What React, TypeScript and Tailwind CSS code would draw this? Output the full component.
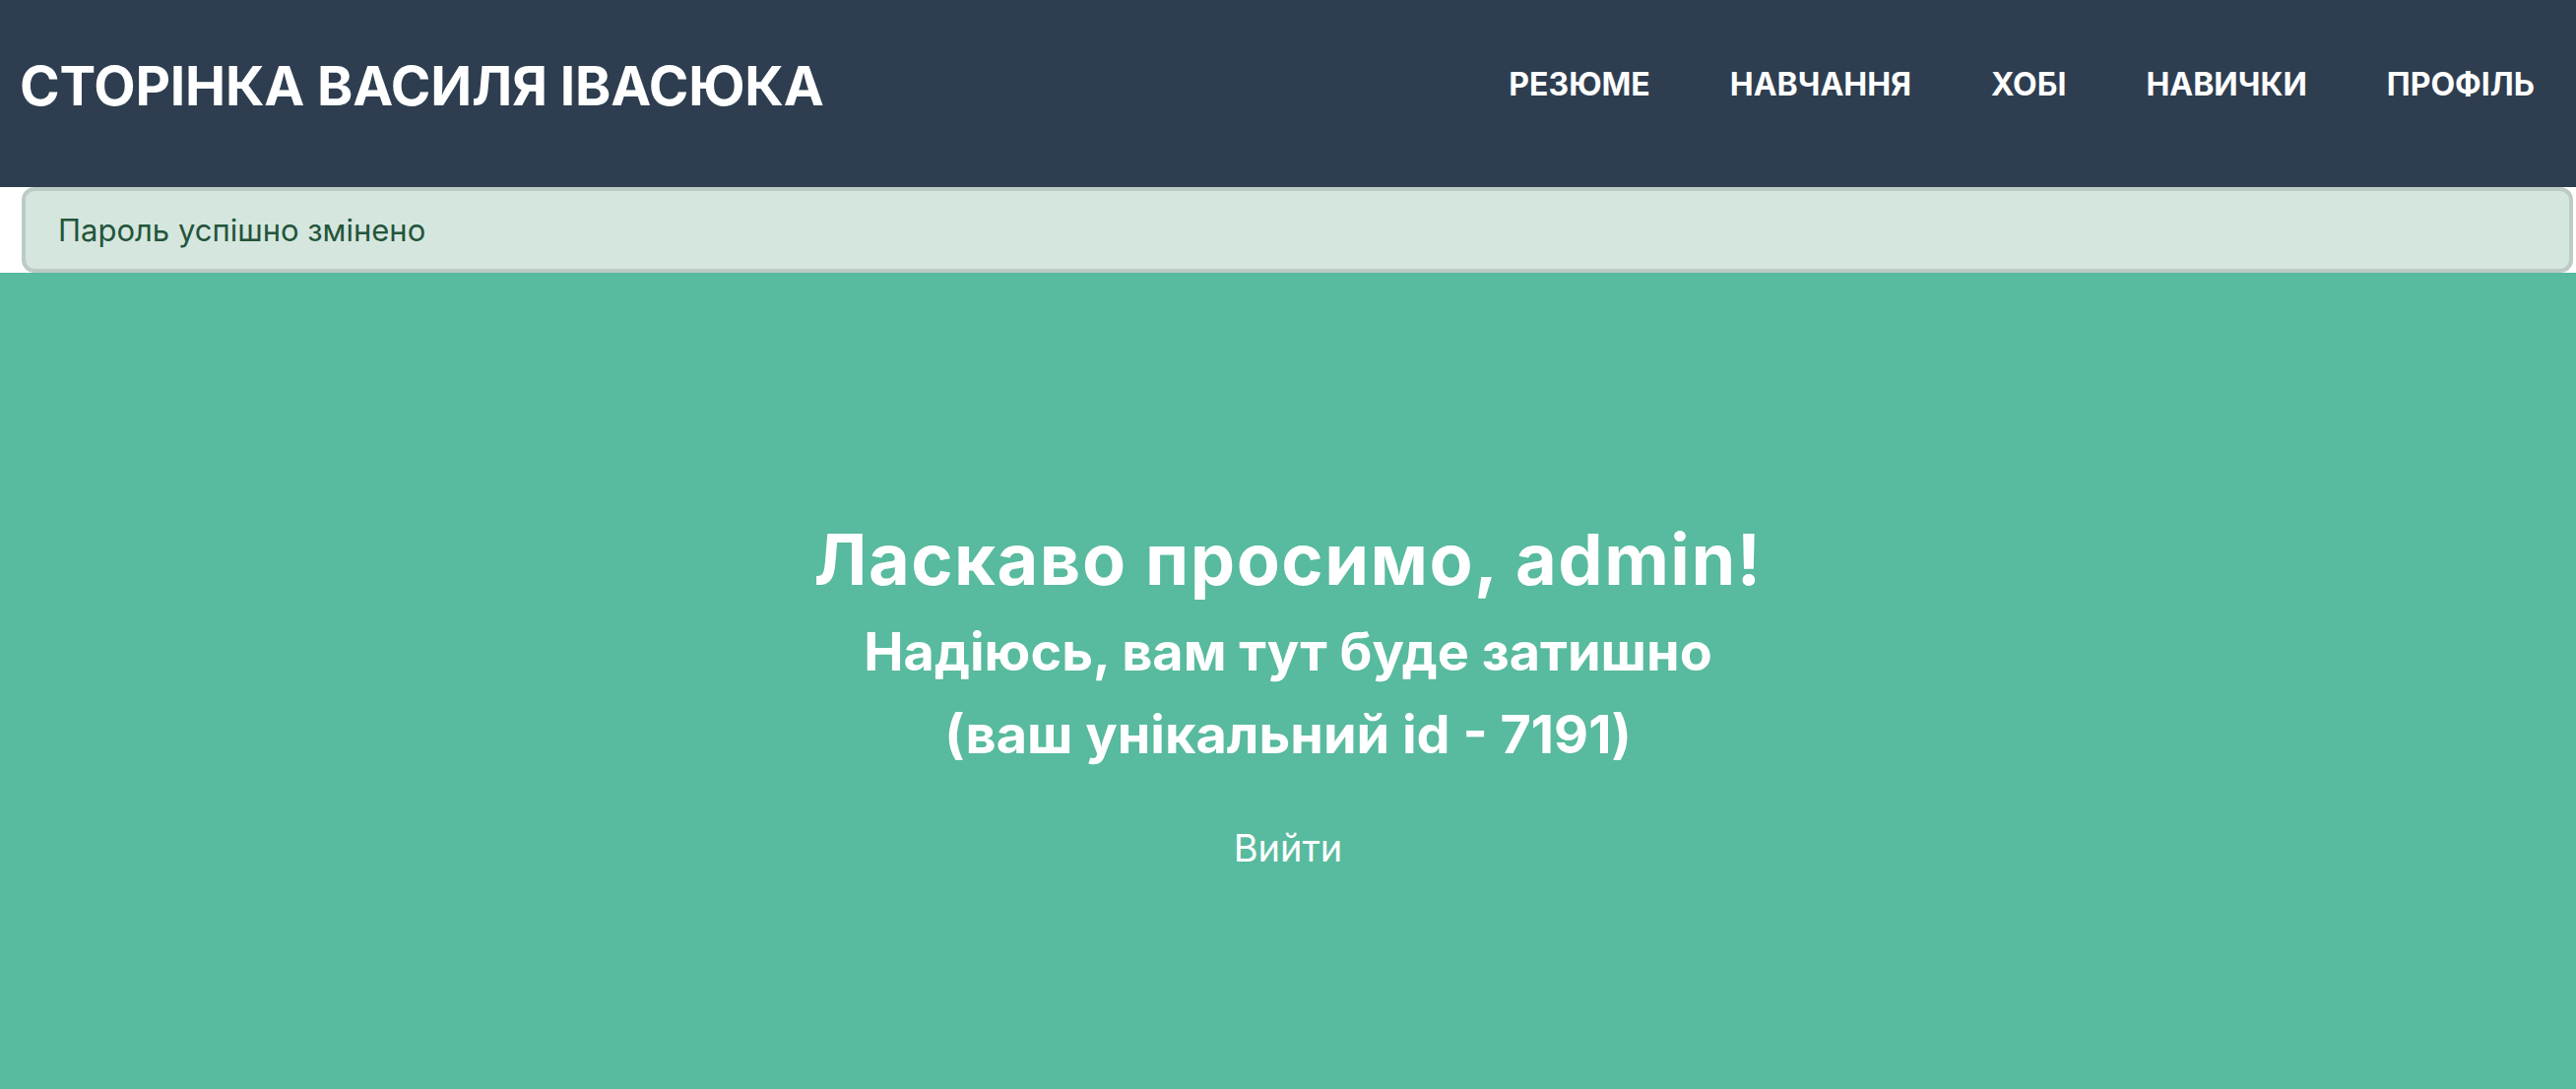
import React from "react";

const navItems = ["РЕЗЮМЕ", "НАВЧАННЯ", "ХОБІ", "НАВИЧКИ", "ПРОФІЛЬ"];

function Header() {
    return (
        <header className="h-[190px] bg-[#2e3e50] flex items-center justify-between pl-[20px] pr-[42px] pb-[17px]">
            <h1 className="text-[55px] font-bold text-white leading-[1.2] tracking-[-0.2px]">
                СТОРІНКА ВАСИЛЯ ІВАСЮКА
            </h1>
            <nav className="flex items-center gap-[81px]">
                {navItems.map((item) => (
                    <a key={item} href="#" className="text-[32px] font-bold text-white leading-[1.2]">
                        {item}
                    </a>
                ))}
            </nav>
        </header>
    );
}

export default function App() {
    return (
        <main className="min-h-screen bg-white font-['Inter','Noto_Sans',sans-serif] flex flex-col">
            <Header />

            {/* success message after password change */}
            <div className="ml-[22px] mr-[3px] h-[87px] flex items-center rounded-[13px] border-4 border-[#bccbc4] bg-[#d5e6de] pl-[33px]">
                <span className="text-[31px] text-[#23553a] leading-[1.2]">Пароль успішно змінено</span>
            </div>

            <section className="flex-1 bg-[#58ba9e] flex flex-col items-center text-white text-center pt-[248px] pb-[160px]">
                <h2 className="text-[72px] font-bold leading-[1.2] tracking-[1.5px]">Ласкаво просимо, admin!</h2>
                <p className="mt-[9px] text-[54px] font-bold leading-[84px]">
                    Надіюсь, вам тут буде затишно
                    <br />
                    (ваш унікальний id - 7191)
                </p>
                <button className="mt-[51px] text-[38px] leading-[1.2] text-white">Вийти</button>
            </section>
        </main>
    );
}
